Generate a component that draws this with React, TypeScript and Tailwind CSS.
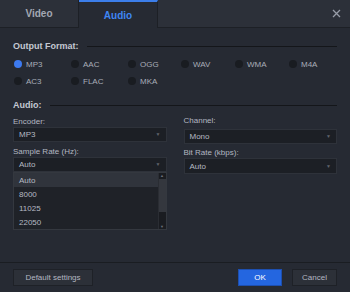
import { useState } from "react";

const formats = [
  ["MP3", "AAC", "OGG", "WAV", "WMA", "M4A"],
  ["AC3", "FLAC", "MKA"],
];
const colW = ["w-[57px]", "w-[57px]", "w-[53px]", "w-[54px]", "w-[54px]", "w-[54px]"];

function Radio({ label, checked, w }: { label: string; checked?: boolean; w: string }) {
  return (
    <div className={"flex items-center gap-[4px] shrink-0 " + w}>
      <span
        className={
          "w-[8px] h-[8px] rounded-full " +
          (checked ? "bg-[#3d7af0]" : "bg-[#191c21]")
        }
      />
      <span className="text-[#a9adb8]">{label}</span>
    </div>
  );
}

function Select({ value, h = "h-[15px]" }: { value: string; h?: string }) {
  return (
    <div
      className={
        h +
        " bg-[#1c1f25] border border-[#2e323a] flex items-center justify-between pl-[5px] pr-[5px] text-[8px] text-[#b5b9c3]"
      }
    >
      <span>{value}</span>
      <span className="text-[#5f636c] text-[5px]">▼</span>
    </div>
  );
}

function Section({ title }: { title: string }) {
  return (
    <div className="flex items-center gap-[8px] h-[12px]">
      <span className="font-bold text-[9px] text-[#c4c8d2]">{title}</span>
      <div className="flex-1 h-px bg-[#14161a]" />
    </div>
  );
}

export default function App() {
  const [rate] = useState(["Auto", "8000", "11025", "22050"]);

  return (
    <div
      className="w-[350px] h-[292px] bg-[#262a33] flex flex-col text-[8px] leading-[11px] text-[#b3b7c1]"
      style={{ fontFamily: "'Liberation Sans', Arial, sans-serif" }}
    >
      <div className="h-[28px] flex bg-[#2c3039] border-b border-[#1d2026] shrink-0">
        <div className="w-[79px] flex items-center justify-center border-r border-[#1d2026] font-bold text-[10px] text-[#a3a8b3]">
          Video
        </div>
        <div className="w-[79px] flex items-center justify-center border-r border-[#1d2026] border-t-2 border-t-[#3c7eea] bg-[#262a33] font-bold text-[10px] text-[#3f86f3] h-[28px]">
          Audio
        </div>
        <div className="flex-1" />
        <div className="w-[28px] flex items-center justify-center">
          <svg width="9" height="9" viewBox="0 0 9 9">
            <path d="M1 1L8 8M8 1L1 8" stroke="#979ca7" strokeWidth="1.3" />
          </svg>
        </div>
      </div>

      <div className="flex-1 px-[13px] pt-[12px] flex flex-col">
        <Section title="Output Format:" />
        <div className="flex flex-col gap-[7px] mt-[7px] pl-[1px]">
          {formats.map((row, i) => (
            <div key={i} className="flex h-[10px] items-center">
              {row.map((f, j) => (
                <Radio key={f} label={f} checked={f === "MP3"} w={colW[j]} />
              ))}
            </div>
          ))}
        </div>

        <div className="mt-[13px]">
          <Section title="Audio:" />
        </div>

        <div className="grid grid-cols-2 gap-x-[17px] mt-[4px]">
          <div className="flex flex-col">
            <span className="mt-[1px]">Encoder:</span>
            <Select value="MP3" />
            <span className="mt-[4px]">Sample Rate (Hz):</span>
            <div className="relative">
              <Select value="Auto" />
              <div className="absolute left-0 right-0 top-[15px] h-[58px] bg-[#1f2228] border border-[#34383f] flex text-[8px] text-[#b5b9c3]">
                <div className="flex-1 flex flex-col">
                  {rate.map((r, i) => (
                    <div
                      key={r}
                      className={
                        "h-[14px] flex items-center pl-[5px] " +
                        (i === 0 ? "bg-[#30343c]" : "")
                      }
                    >
                      {r}
                    </div>
                  ))}
                </div>
                <div className="w-[8px] flex flex-col bg-[#1a1c21] border-l border-[#2a2d33]">
                  <span className="h-[5px] text-[4px] leading-[5px] text-center text-[#6c707a]">
                    ▲
                  </span>
                  <div className="h-[33px] mt-[1px] bg-[#34373e]" />
                  <div className="flex-1" />
                  <span className="h-[5px] text-[4px] leading-[5px] text-center text-[#6c707a]">
                    ▼
                  </span>
                </div>
              </div>
            </div>
          </div>
          <div className="flex flex-col">
            <span>Channel:</span>
            <div className="mt-[3px]">
              <Select value="Mono" />
            </div>
            <span className="mt-[3px]">Bit Rate (kbps):</span>
            <Select value="Auto" h="h-[16px]" />
          </div>
        </div>
      </div>

      <div className="border-t border-[#1a1d22] h-[30px] shrink-0 flex items-center px-[13px] gap-[10px]">
        <button className="h-[17px] w-[80px] bg-[#2c3038] border border-[#1e2127] text-[8px] text-[#b3b7c1]">
          Default settings
        </button>
        <div className="flex-1" />
        <button className="h-[17px] w-[44px] bg-[#2466e0] border border-[#1d4fb0] text-[8px] text-white">
          OK
        </button>
        <button className="h-[17px] w-[45px] bg-[#2c3038] border border-[#1e2127] text-[8px] text-[#b3b7c1]">
          Cancel
        </button>
      </div>
    </div>
  );
}
